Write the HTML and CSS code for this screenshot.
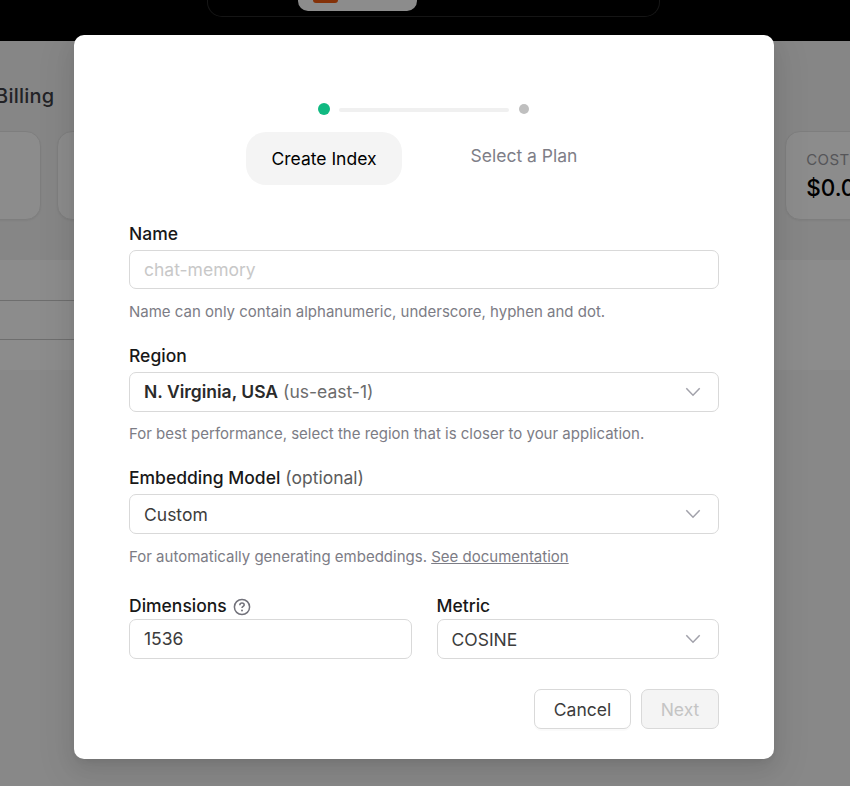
FILE: index.html
```html
<!DOCTYPE html>
<html lang="en">
<head>
<meta charset="utf-8">
<title>Create Index</title>
<link rel="stylesheet" href="styles.css">
</head>
<body>
<div class="page">
  <header class="topbar">
    <nav class="switcher"><div class="switcher-tab"><span class="tab-logo"></span></div></nav>
  </header>
  <section class="summary">
    <h2 class="tab-title">Billing</h2>
    <div class="stats">
      <div class="stat"></div>
      <div class="stat"></div>
      <div class="stat"></div>
      <div class="stat"></div>
      <div class="stat"><span class="stat-label">COST</span><span class="stat-value">$0.00</span></div>
    </div>
  </section>
  <section class="table">
    <div class="row"></div>
    <div class="row"></div>
  </section>
</div>

<div class="overlay">
  <div class="modal" role="dialog">
    <ol class="steps">
      <li class="step">
        <span class="dot dot-active"></span>
        <span class="step-title step-title-active">Create Index</span>
      </li>
      <li class="step-line"></li>
      <li class="step">
        <span class="dot"></span>
        <span class="step-title">Select a Plan</span>
      </li>
    </ol>

    <div class="field">
      <label class="label">Name</label>
      <div class="control control-name"><span class="placeholder">chat-memory</span></div>
      <p class="help">Name can only contain alphanumeric, underscore, hyphen and dot.</p>
    </div>
    <div class="field field-region">
      <label class="label">Region</label>
      <div class="control">
        <span class="value value-raised"><b class="region-name">N. Virginia, USA</b> <span class="region-code">(us-east-1)</span></span>
        <svg class="chevron" viewBox="0 0 16 10"><path d="M1.3 1.3 8 8.2l6.7-6.9"/></svg>
      </div>
      <p class="help">For best performance, select the region that is closer to your application.</p>
    </div>
    <div class="field field-model">
      <label class="label">Embedding Model <span class="optional">(optional)</span></label>
      <div class="control">
        <span class="value">Custom</span>
        <svg class="chevron" viewBox="0 0 16 10"><path d="M1.3 1.3 8 8.2l6.7-6.9"/></svg>
      </div>
      <p class="help">For automatically generating embeddings. <a class="link">See documentation</a></p>
    </div>
    <div class="columns">
      <div class="field">
        <label class="label label-tight">Dimensions
          <svg class="info" viewBox="0 0 18 18"><circle cx="9" cy="9" r="7.6"/><path d="M6.8 7.2C6.9 5.8 7.8 5.1 9 5.1s2.2.8 2.2 1.9c0 1.4-2.2 1.5-2.2 3.1"/><circle class="info-dot" cx="9" cy="12.5" r=".95"/></svg>
        </label>
        <div class="control"><span class="value value-raised">1536</span></div>
      </div>
      <div class="field">
        <label class="label label-tight">Metric</label>
        <div class="control control-metric">
          <span class="value">COSINE</span>
          <svg class="chevron" viewBox="0 0 16 10"><path d="M1.3 1.3 8 8.2l6.7-6.9"/></svg>
        </div>
      </div>
    </div>
    <div class="actions">
      <button class="btn btn-cancel">Cancel</button>
      <button class="btn btn-next" disabled>Next</button>
    </div>
  </div>
</div>
</body>
</html>
```

FILE: styles.css
```css
* { box-sizing: border-box; }
body {
  margin: 0;
  height: 786px;
  overflow: hidden;
  font-family: Inter, sans-serif;
  font-size: 17.5px;
  line-height: 27px;
  color: #181818;
}
.page { height: 786px; overflow: hidden; background: #f7f7f7; }
.topbar { height: 41px; background: #000; }
.switcher {
  width: 453px;
  height: 17px;
  margin-left: 207px;
  padding-left: 90px;
  border: 1px solid #292929;
  border-top: 0;
  border-radius: 0 0 15px 15px;
}
.switcher-tab {
  width: 119px;
  height: 11px;
  padding-left: 15px;
  background: #fff;
  border-radius: 0 0 10px 10px;
}
.tab-logo {
  display: block;
  width: 25px;
  height: 3px;
  background: #f0590f;
  border-radius: 0 0 5px 5px;
}
.summary { height: 219px; padding-top: 38px; background: #f4f4f4; }
.tab-title {
  margin: 0 0 18px -5px;
  font-size: 20px;
  line-height: 34px;
  letter-spacing: .25px;
  font-weight: 500;
  color: #3f3f46;
}
.stats { display: flex; gap: 16px; margin-left: -186px; }
.stat {
  flex: none;
  display: flex;
  flex-direction: column;
  width: 226.8px;
  height: 89px;
  padding: 15px 20px;
  background: #fff;
  border: 1px solid #e6e6e6;
  border-radius: 15px;
  box-shadow: 0 1px 2px rgba(0, 0, 0, .05);
}
.stat-label { font-size: 15px; line-height: 26px; letter-spacing: .4px; color: #9b9ba2; }
.stat-value { font-size: 22.5px; line-height: 30px; font-weight: 450; color: #000; }
.table { width: 760px; height: 110px; padding-top: 40px; background: #fff; box-shadow: 90px 0 #fff; }
.row { height: 39px; border-top: 1px solid #c8c8c8; }
.row + .row { height: 31px; }

.overlay {
  position: absolute;
  inset: 0;
  padding: 35px 76px 0 74px;
  background: rgba(0, 0, 0, .45);
}
.modal {
  width: 700px;
  height: 724px;
  padding: 68px 55px 0;
  background: #fff;
  border-radius: 10px;
  box-shadow: 0 8px 20px rgba(0, 0, 0, .08), 0 4px 8px -5px rgba(0, 0, 0, .12), 0 11px 35px 10px rgba(0, 0, 0, .05);
}
.steps {
  display: flex;
  justify-content: center;
  height: 117px;
  margin: 0;
  padding: 0;
  list-style: none;
}
.step { display: flex; flex-direction: column; align-items: center; width: 186px; }
.step-line { width: 170px; height: 4px; margin: 5px -78px 0; background: #f0f0f0; border-radius: 2px; }
.dot { width: 10px; height: 10px; margin-top: 1px; background: #bfbfbf; border-radius: 50%; }
.dot-active { width: 12px; height: 12px; margin-top: 0; background: #10b981; }
.step-title { margin-top: 28px; color: #7e7e87; white-space: nowrap; }
.step-title-active {
  margin-top: 17px;
  padding: 13px 25px;
  background: #f4f4f4;
  border-radius: 20px;
  color: #000;
}
.field { display: flex; flex-direction: column; }
.label { display: flex; align-items: center; height: 30px; padding-bottom: 4px; gap: 5px; font-weight: 500; }
.label-tight { height: 27px; padding-bottom: 0; }
.optional { font-weight: 400; color: #5c5c5c; }
.control {
  display: flex;
  align-items: center;
  justify-content: space-between;
  height: 40px;
  padding: 0 17.5px 0 14px;
  border: 1px solid #d9d9d9;
  border-radius: 7px;
}
.control-name { height: 39px; }
.control-metric { padding-left: 13.5px; }
.placeholder { color: #c8c8c8; }
.value { color: #3c3c3c; }
.value-raised { padding-bottom: 2px; }
.region-name { font-weight: 600; color: #2a2a2a; }
.region-code { color: #6c6c6c; }
.chevron { width: 16px; height: 10px; fill: none; stroke: #a1a1aa; stroke-width: 1.5; }
.help { margin: 10px 0 0; font-size: 15px; line-height: 25px; color: #7c7c85; }
.link { text-decoration: underline; }
.field-region { margin-top: 18px; }
.field-region .help { margin-top: 9px; }
.field-model { margin-top: 18px; }
.columns { display: grid; grid-template-columns: 283px 282px; gap: 25px; margin-top: 23px; }
.columns .field:last-child .label { margin-left: -.5px; }
.info { width: 18px; height: 18px; margin: 2px 0 0 1px; fill: none; stroke: #71717a; stroke-width: 1.5; }
.info .info-dot { fill: #71717a; stroke: none; }
.actions { display: flex; justify-content: flex-end; gap: 10px; margin-top: 30px; }
.btn {
  height: 40px;
  padding: 0;
  border: 1px solid #d9d9d9;
  border-radius: 7px;
  font: inherit;
}
.btn-cancel { width: 97px; background: #fff; color: #3c3c3c; box-shadow: 0 2px 0 rgba(0, 0, 0, .02); }
.btn-next { width: 78px; background: #f4f4f4; color: #c4c4c4; }
```
